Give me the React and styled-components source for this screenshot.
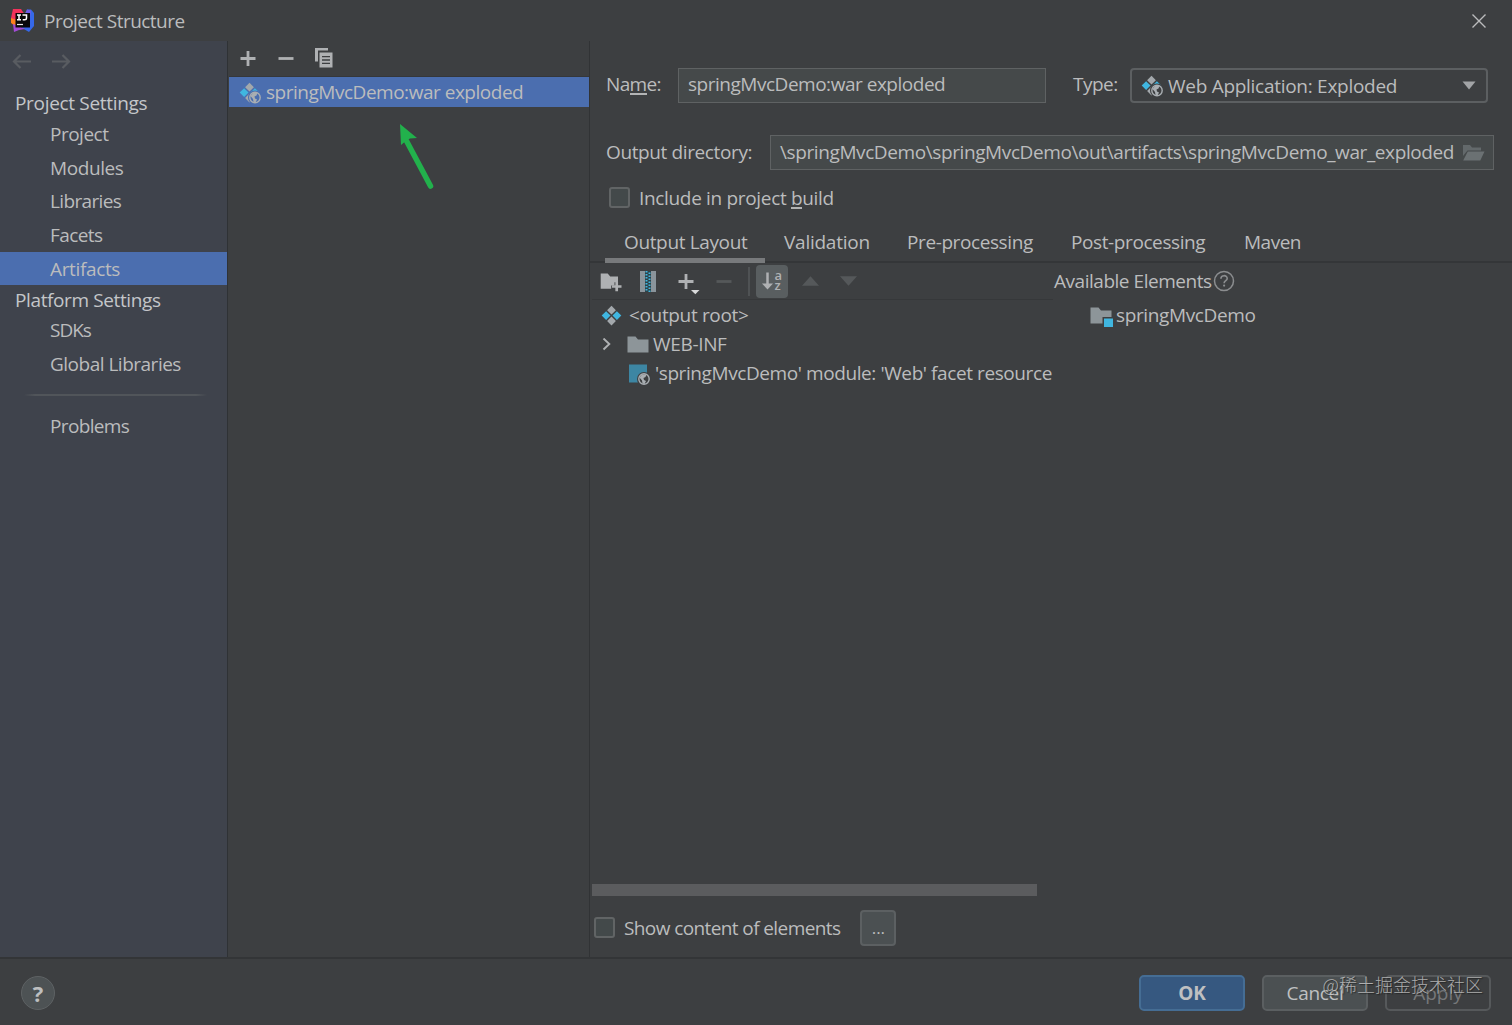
import { useState } from 'react';
import styled, { createGlobalStyle } from 'styled-components'

const GlobalStyle = createGlobalStyle`
  * {
    box-sizing: border-box;
  }
  body {
    margin: 0;
    background: #3d3f41;
  }
  svg {
    display: block;
    flex: none;
  }
`

const Window = styled.div`
  position: relative;
  display: flex;
  flex-direction: column;
  width: 1512px;
  height: 1025px;
  overflow: hidden;
  background: #3d3f41;
  color: #bbbcbd;
  font-family: 'Open Sans', 'Noto Sans', 'Noto Sans CJK SC', sans-serif;
  font-size: 19px;
`
const Text = styled.span`
  white-space: nowrap;
  letter-spacing: ${p => p.$track || 0}px;
`

/* title bar */
const TitleBar = styled.header`
  display: flex;
  align-items: center;
  height: 41px;
  padding: 0 25px 0 10px;
`
const Title = styled(Text)`
  flex: 1;
  margin-left: 9px;
`

const Body = styled.main`
  display: flex;
  height: 916px;
`

/* left navigation */
const Sidebar = styled.nav`
  width: 228px;
  background: #3f434c;
  border-right: 1px solid #2f3235;
`
const History = styled.div`
  display: flex;
  gap: 19px;
  height: 47px;
  padding: 10px 0 0 12px;
`
const GroupTitle = styled.div`
  height: ${p => p.$height}px;
  line-height: 30px;
  padding-left: 15px;
  color: #c4c6c9;
`
const NavItem = styled.div`
  height: 33.7px;
  line-height: 35px;
  padding-left: 50px;
  background: ${p => (p.$active ? '#4b6eaf' : 'transparent')};
`
const NavDivider = styled.div`
  height: 2px;
  margin: 13px 20px 13px 24px;
  background: linear-gradient(to right, transparent, #51555a 6%, #51555a 94%, transparent);
`

/* list of artifacts */
const ListPanel = styled.section`
  position: relative;
  width: 362px;
  padding-left: 1px;
  border-right: 1px solid #313335;
`
const ListToolbar = styled.div`
  display: flex;
  align-items: center;
  gap: 16px;
  height: 36px;
  padding: 0 0 1px 8px;
  border-bottom: 1px solid #35373a;
`
const ListRow = styled.div`
  display: flex;
  align-items: center;
  gap: 5px;
  height: 30px;
  padding: 0 0 1px 10px;
  background: #4b6eaf;
  svg {
    margin-top: 3px;
  }
`
const Pointer = styled.svg`
  position: absolute;
  left: 168px;
  top: 80px;
`

/* editor */
const Editor = styled.section`
  display: flex;
  flex-direction: column;
  flex: 1;
  min-width: 0;
`
const Form = styled.div`
  padding: 26px 18px 0 15px;
`
const FieldRow = styled.div`
  display: flex;
  align-items: center;
  height: ${p => p.$height}px;
  margin-bottom: ${p => p.$gap}px;
`
const Label = styled(Text)`
  width: ${p => p.$width}px;
  padding: 0 0 ${p => p.$lift || 1}px ${p => p.$indent || 1}px;
`
const Mnemonic = styled.span`
  border-bottom: 2px solid #b3b4b5;
  display: inline-block;
  line-height: 17px;
`
const Input = styled.div`
  display: flex;
  align-items: center;
  width: ${p => p.$width}px;
  height: 35px;
  padding: 0 8px 2px 9px;
  background: #45494a;
  border: 1.5px solid #5f6263;
  svg {
    margin: 2px 0 0 auto;
  }
`
const Select = styled.div`
  display: flex;
  align-items: center;
  gap: 5px;
  width: 358px;
  height: 35px;
  padding: 2px 9px 0 9px;
  border: 2px solid #5c5f61;
  border-radius: 4px;
  > svg:last-child {
    margin: -2px 1px 0 auto;
  }
`
const CheckBox = styled.button`
  width: 21px;
  height: 21px;
  padding: 0;
  margin-left: ${p => p.$indent || 0}px;
  margin-right: 9px;
  background: ${p => (p.$checked ? '#4b6eaf' : '#43494a')};
  border: 2px solid #616465;
  border-radius: 3px;
`

const Tabs = styled.div`
  display: flex;
  height: 43px;
  margin-top: 12px;
  padding-left: 15px;
  border-bottom: 2px solid #343638;
`
const Tab = styled.div`
  height: 43px;
  width: ${p => p.$width}px;
  line-height: 45px;
  padding-left: 19px;
  border-bottom: 5px solid ${p => (p.$active ? '#787a7c' : 'transparent')};
`

const Panes = styled.div`
  display: flex;
  flex: 1;
`
const LayoutPane = styled.div`
  display: flex;
  flex-direction: column;
  width: 463px;
  padding-left: 2px;
`
const LayoutToolbar = styled.div`
  display: flex;
  align-items: center;
  height: 37px;
  padding-left: 7px;
  border-bottom: 1px solid #36383a;
`
const ToolIcon = styled.div`
  display: flex;
  align-items: center;
  justify-content: center;
  width: ${p => p.$width}px;
  height: 33px;
  svg {
    overflow: visible;
  }
`
const Separator = styled.div`
  width: 2px;
  height: 29px;
  margin-left: -1px;
  margin-right: 6px;
  background: #4f5254;
`
const SortToggle = styled.div`
  display: flex;
  align-items: center;
  justify-content: center;
  width: 32px;
  height: 33px;
  margin-right: 3px;
  background: #595e60;
  border-radius: 4px;
`
const Tree = styled.div`
  flex: 1;
  svg {
    margin-top: 2px;
  }
`
const TreeRow = styled.div`
  display: flex;
  align-items: center;
  height: 29.2px;
  padding-left: ${p => p.$indent}px;
  gap: ${p => p.$gap}px;
`
const Expander = styled.div`
  width: 23px;
`
const ScrollThumb = styled.div`
  width: 445px;
  height: 12px;
  background: #5b5c5e;
`
const ContentRow = styled.div`
  display: flex;
  align-items: center;
  height: 61px;
  padding: 2px 0 0 2px;
`
const MoreButton = styled.button`
  width: 36px;
  height: 36px;
  margin-left: 20px;
  padding: 0;
  color: #bbbcbd;
  font: inherit;
  font-size: 17px;
  background: #4b5052;
  border: 2px solid #5c6062;
  border-radius: 4px;
`

const AvailablePane = styled.div`
  flex: 1;
`
const AvailableTitle = styled.div`
  display: flex;
  align-items: center;
  gap: 1px;
  height: 35px;
  padding-left: 1px;
`
const AvailableRow = styled.div`
  display: flex;
  align-items: center;
  gap: 3px;
  height: 34px;
  padding-left: 37px;
  svg {
    margin-top: 2px;
  }
`

/* bottom bar */
const Footer = styled.footer`
  position: relative;
  display: flex;
  align-items: center;
  height: 68px;
  padding: 1px 21px 0 21px;
  border-top: 2px solid #333537;
`
const HelpButton = styled.button`
  width: 34px;
  height: 34px;
  margin-right: auto;
  padding: 0;
  color: #bdbfc0;
  font: 700 22px/30px 'Open Sans', 'Noto Sans', sans-serif;
  background: #4d5254;
  border: 1px solid #5e6264;
  border-radius: 50%;
`
const Button = styled.button`
  width: 106px;
  height: 36px;
  margin-left: 17px;
  padding: 0;
  font: inherit;
  letter-spacing: ${p => p.$track || 0}px;
  font-weight: ${p => (p.$primary ? 700 : 400)};
  color: ${p => (p.$disabled ? '#76787a' : '#bfc0c1')};
  background: ${p => (p.$primary ? '#365880' : p.$disabled ? 'transparent' : '#4b5052')};
  border: 2px solid ${p => (p.$primary ? '#456d94' : p.$disabled ? '#56595b' : '#5b5f61')};
  border-radius: 5px;
`
const Watermark = styled.div`
  position: absolute;
  right: 29px;
  top: 12px;
  color: rgba(205, 205, 205, 0.78);
  font: 300 18px/26px 'Noto Sans CJK SC', sans-serif;
  text-shadow: 1px 1px 1px rgba(20, 20, 20, 0.6);
  white-space: nowrap;
`

const LogoIcon = () => (
  <svg width="25" height="25" viewBox="0 0 25 25">
    <path d="M3 1h8l4 6-4 12-8-2-2-7z" fill="#f2315b" />
    <path d="M1 10l8 3-2 6-6-4z" fill="#fc801d" />
    <path d="M17 1.500h4l3 3.500v13l-5 6-7-4z" fill="#3668e8" />
    <path d="M17 1.500l4 1-1 8-5-5z" fill="#6c5ce7" />
    <path d="M3 16l6 2 6 3-6 1-5 2z" fill="#a24bd6" />
    <rect x="5.500" y="5" width="14.500" height="14.500" fill="#080808" />
    <path d="M7 7h4M9 7v4.500M7 11.700h4M12.500 7h4v3.300q0 1.500-1.800 1.500h-2" fill="none" stroke="#fff" strokeWidth="1.500" />
    <path d="M7 16.500h6" stroke="#e8e8e8" strokeWidth="1.200" />
  </svg>
)

const CloseIcon = () => (
  <svg width="16" height="16" viewBox="0 0 16 16">
    <path d="M1.500 1.500l13 13M14.500 1.500l-13 13" stroke="#bbbcbd" strokeWidth="1.400" />
  </svg>
)

const ArrowIcon = ({ flip }) => (
  <svg width="20" height="20" viewBox="0 0 20 20">
    <g transform={flip ? 'translate(20 0) scale(-1 1)' : undefined}>
      <path d="M19 10.500H2M8.500 4L2 10.500 8.500 17" fill="none" stroke="#595c61" strokeWidth="2.200" />
    </g>
  </svg>
)

const PlusIcon = ({ menu }) => (
  <svg width="22" height="22" viewBox="0 0 22 22">
    <path d="M3.500 11.500h15M11 4v15" stroke="#afb1b3" strokeWidth="2.800" />
    {menu && <path d="M16 20h8.500l-4.200 4.300z" fill="#d8d9da" />}
  </svg>
)

const MinusIcon = ({ color = '#afb1b3' }) => (
  <svg width="22" height="22" viewBox="0 0 22 22">
    <path d="M3.500 11.500h15" stroke={color} strokeWidth="2.800" />
  </svg>
)

const CopyIcon = () => (
  <svg width="22" height="22" viewBox="0 0 22 22">
    <path d="M2 14.500V1h13v2.500H5v11z" fill="#afb1b3" />
    <rect x="6.500" y="5.500" width="13" height="15" fill="#afb1b3" />
    <path d="M9 9.700h8M9 13h8M9 16.300h8" stroke="#3d3f41" strokeWidth="1.300" />
  </svg>
)

const Globe = ({ x, y, bg }) => (
  <g transform={`translate(${x} ${y})`}>
    <circle r="7" fill={bg} />
    <circle r="5.200" fill="none" stroke="#a9aeb2" strokeWidth="1.400" />
    <path d="M-4.500-1.500L-2-4.500 2.500-4.800 1.500-2 -.5-1 0 1 2 2 .5 5-1.500 4.500-2 1.500z" fill="#a9aeb2" />
  </g>
)

// four tiles, with a globe over the lower right when it is a web artifact
const ArtifactIcon = ({ web, bg = '#3d3f41' }) => (
  <svg width="22" height="22" viewBox="0 0 22 22">
    <path d="M10.500 .8l4.400 4.400-4.400 4.400-4.400-4.400z" fill="#a3a8ac" />
    <path d="M5.100 6.200l4.400 4.400L5.100 15 .7 10.600z" fill="#40b6e0" />
    <path d="M15.900 6.200l4.400 4.400-4.400 4.400-4.400-4.400z" fill="#40b6e0" />
    <path d="M10.500 11.600l4.400 4.400-4.400 4.400L6.100 16z" fill="#a3a8ac" />
    {web && <Globe x={16} y={15.500} bg={bg} />}
  </svg>
)

const OpenFolderIcon = () => (
  <svg width="23" height="18" viewBox="0 0 23 18">
    <path d="M1 12V1h7l2 2.500h9v3H5.500z" fill="#63696b" />
    <path d="M5.800 7.500H22.500l-4.200 9H1.200z" fill="#6b7173" />
  </svg>
)

const Triangle = ({ up, color }) => (
  <svg width="17" height="10" viewBox="0 0 18 10">
    <path d={up ? 'M9 0l9 10H0z' : 'M0 0h18L9 10z'} fill={color} />
  </svg>
)

const ComboArrow = () => (
  <svg width="14" height="9" viewBox="0 0 14 9">
    <path d="M.5.500h13L7 8.500z" fill="#a2a4a6" />
  </svg>
)

const NewFolderIcon = () => (
  <svg width="22" height="22" viewBox="0 0 22 22">
    <path d="M.7 3.500h7l2.500 3H18v5.700h-3.500v3.200h-3.300v3.300H.7z" fill="#afb1b3" />
    <path d="M12 16.500h9.500M16.700 11.800v9.500" stroke="#afb1b3" strokeWidth="2.700" />
  </svg>
)

const ArchiveIcon = () => (
  <svg width="16" height="22" viewBox="0 0 16 22">
    <rect y="1" width="5" height="21" fill="#8a949b" />
    <rect x="11" y="1" width="5" height="21" fill="#8a949b" />
    <rect x="5" y="1" width="6" height="21" fill="#2d4249" />
    <path d="M6.500 1v21M9.500 2.500v19.500" stroke="#40b6e0" strokeWidth="2" strokeDasharray="1.500 1.500" />
  </svg>
)

const SortLetter = styled.text`
  font-family: 'Open Sans', sans-serif;
  font-weight: 600;
  font-size: 13px;
  fill: #afb1b3;
`
const SortIcon = () => (
  <svg width="26" height="30" viewBox="0 0 26 30">
    <path d="M8.500 6.500v12" stroke="#afb1b3" strokeWidth="2.500" />
    <path d="M3 17.500h11l-5.500 6z" fill="#afb1b3" />
    <SortLetter x="15.500" y="14">a</SortLetter>
    <SortLetter x="15.500" y="24">z</SortLetter>
  </svg>
)

const ChevronIcon = () => (
  <svg width="10" height="14" viewBox="0 0 10 14">
    <path d="M2.500 .5L8.300 6 2.500 11.500" fill="none" stroke="#afb1b3" strokeWidth="1.900" />
  </svg>
)

const FolderIcon = ({ module }) => (
  <svg width="23" height="22" viewBox="0 0 23 22">
    <path d="M.5 2.500h8l2.500 3h10.500v13H.5z" fill="#8d9599" />
    {module && <path d="M12.500 12H23v10H12.500z" fill="#3d3f41" />}
    {module && <path d="M14 13.500h9V22h-9z" fill="#40b6e0" />}
  </svg>
)

const FacetIcon = () => (
  <svg width="22" height="22" viewBox="0 0 22 22">
    <rect y="1.500" width="18" height="18" fill="#3d86a3" />
    <Globe x={15} y={16} bg="#3d3f41" />
  </svg>
)

const HelpIcon = () => (
  <svg width="22" height="22" viewBox="0 0 22 22">
    <circle cx="11" cy="11" r="9.500" fill="none" stroke="#8b8d8f" strokeWidth="1.500" />
    <path d="M7.900 8.800c0-4.200 6.300-4 6.300-.4 0 2.200-3.100 2.300-3.100 4.800" fill="none" stroke="#8b8d8f" strokeWidth="1.600" />
    <circle cx="11.100" cy="15.600" r="1.100" fill="#8b8d8f" />
  </svg>
)

const PROJECT_ITEMS = [
  { name: 'Project', track: -0.5 },
  { name: 'Modules', track: -0.4 },
  { name: 'Libraries', track: -0.65 },
  { name: 'Facets', track: -0.6 },
  { name: 'Artifacts', track: -0.35 },
];
const PLATFORM_ITEMS = [
  { name: 'SDKs', track: -1 },
  { name: 'Global Libraries', track: -0.5 },
];
const TABS = [
  { name: 'Output Layout', width: 160, track: -0.36 },
  { name: 'Validation', width: 123, track: -0.25 },
  { name: 'Pre-processing', width: 164, track: -0.4 },
  { name: 'Post-processing', width: 173, track: -0.4 },
  { name: 'Maven', width: 96, track: -0.5 },
];

const App = () => {
  const [page, setPage] = useState('Artifacts');
  const [tab, setTab] = useState('Output Layout');
  const [inBuild, setInBuild] = useState(false);
  const [showContent, setShowContent] = useState(false);

  const renderItem = (el) => (
    <NavItem key={el.name} $active={page === el.name} onClick={() => setPage(el.name)}>
      <Text $track={el.track}>{el.name}</Text>
    </NavItem>
  )

  return (
    <Window>
      <GlobalStyle />
      <TitleBar>
        <LogoIcon />
        <Title $track={-0.52}>Project Structure</Title>
        <CloseIcon />
      </TitleBar>
      <Body>
        <Sidebar>
          <History>
            <ArrowIcon />
            <ArrowIcon flip />
          </History>
          <GroupTitle $height={29}><Text $track={-0.32}>Project Settings</Text></GroupTitle>
          {PROJECT_ITEMS.map(renderItem)}
          <GroupTitle $height={28}><Text $track={-0.38}>Platform Settings</Text></GroupTitle>
          {PLATFORM_ITEMS.map(renderItem)}
          <NavDivider />
          <NavItem $active={page === 'Problems'} onClick={() => setPage('Problems')}>
            <Text $track={-0.65}>Problems</Text>
          </NavItem>
        </Sidebar>

        <ListPanel>
          <ListToolbar>
            <PlusIcon />
            <MinusIcon />
            <CopyIcon />
          </ListToolbar>
          <ListRow>
            <ArtifactIcon web bg="#4b6eaf" />
            <Text $track={-0.48}>springMvcDemo:war exploded</Text>
          </ListRow>
          <Pointer width="40" height="70" viewBox="0 0 40 70">
            <path d="M10 19L34.500 65" stroke="#22b14c" strokeWidth="5.500" strokeLinecap="round" />
            <path d="M4 3l17 14-7 .5-3 1.500-6 5z" fill="#22b14c" />
          </Pointer>
        </ListPanel>

        <Editor>
          <Form>
            <FieldRow $height={36} $gap={32}>
              <Label $width={73} $lift={3} $track={-0.65}>Na<Mnemonic>m</Mnemonic>e:</Label>
              <Input $width={368}>
                <Text $track={-0.48}>springMvcDemo:war exploded</Text>
              </Input>
              <Label $width={84} $lift={3} $indent={27} $track={-0.5}>Type:</Label>
              <Select>
                <ArtifactIcon web />
                <Text $track={-0.28}>Web Application: Exploded</Text>
                <ComboArrow />
              </Select>
            </FieldRow>
            <FieldRow $height={35} $gap={17}>
              <Label $width={165} $lift={2} $track={-0.38}>Output directory:</Label>
              <Input $width={724}>
                <Text $track={-0.4}>{'\\springMvcDemo\\springMvcDemo\\out\\artifacts\\springMvcDemo_war_exploded'}</Text>
                <OpenFolderIcon />
              </Input>
            </FieldRow>
            <FieldRow $height={21} $gap={0}>
              <CheckBox $indent={4} $checked={inBuild} onClick={() => setInBuild(!inBuild)} />
              <Text $track={-0.33}>Include in project <Mnemonic>b</Mnemonic>uild</Text>
            </FieldRow>
          </Form>

          <Tabs>
            {TABS.map(el => (
              <Tab key={el.name} $width={el.width} $active={tab === el.name} onClick={() => setTab(el.name)}>
                <Text $track={el.track}>{el.name}</Text>
              </Tab>
            ))}
          </Tabs>

          <Panes>
            <LayoutPane>
              <LayoutToolbar>
                <ToolIcon $width={24}><NewFolderIcon /></ToolIcon>
                <ToolIcon $width={50}><ArchiveIcon /></ToolIcon>
                <ToolIcon $width={26}><PlusIcon menu /></ToolIcon>
                <ToolIcon $width={50}><MinusIcon color="#55585a" /></ToolIcon>
                <Separator />
                <SortToggle><SortIcon /></SortToggle>
                <ToolIcon $width={38}><Triangle up color="#55585a" /></ToolIcon>
                <ToolIcon $width={38}><Triangle color="#55585a" /></ToolIcon>
              </LayoutToolbar>
              <Tree>
                <TreeRow $indent={9} $gap={6}>
                  <ArtifactIcon />
                  <Text $track={-0.35}>&lt;output root&gt;</Text>
                </TreeRow>
                <TreeRow $indent={9} $gap={3}>
                  <Expander><ChevronIcon /></Expander>
                  <FolderIcon />
                  <Text $track={-0.33}>WEB-INF</Text>
                </TreeRow>
                <TreeRow $indent={37} $gap={4}>
                  <FacetIcon />
                  <Text $track={-0.41}>'springMvcDemo' module: 'Web' facet resource</Text>
                </TreeRow>
              </Tree>
              <ScrollThumb />
              <ContentRow>
                <CheckBox $checked={showContent} onClick={() => setShowContent(!showContent)} />
                <Text $track={-0.6}>Show content of elements</Text>
                <MoreButton>...</MoreButton>
              </ContentRow>
            </LayoutPane>

            <AvailablePane>
              <AvailableTitle>
                <Text $track={-0.47}>Available Elements</Text>
                <HelpIcon />
              </AvailableTitle>
              <AvailableRow>
                <FolderIcon module />
                <Text $track={-0.38}>springMvcDemo</Text>
              </AvailableRow>
            </AvailablePane>
          </Panes>
        </Editor>
      </Body>

      <Footer>
        <HelpButton>?</HelpButton>
        <Button $primary>OK</Button>
        <Button $track={-0.3}>Cancel</Button>
        <Button $disabled>Apply</Button>
        <Watermark>@稀土掘金技术社区</Watermark>
      </Footer>
    </Window>
  );
}

export default App;
